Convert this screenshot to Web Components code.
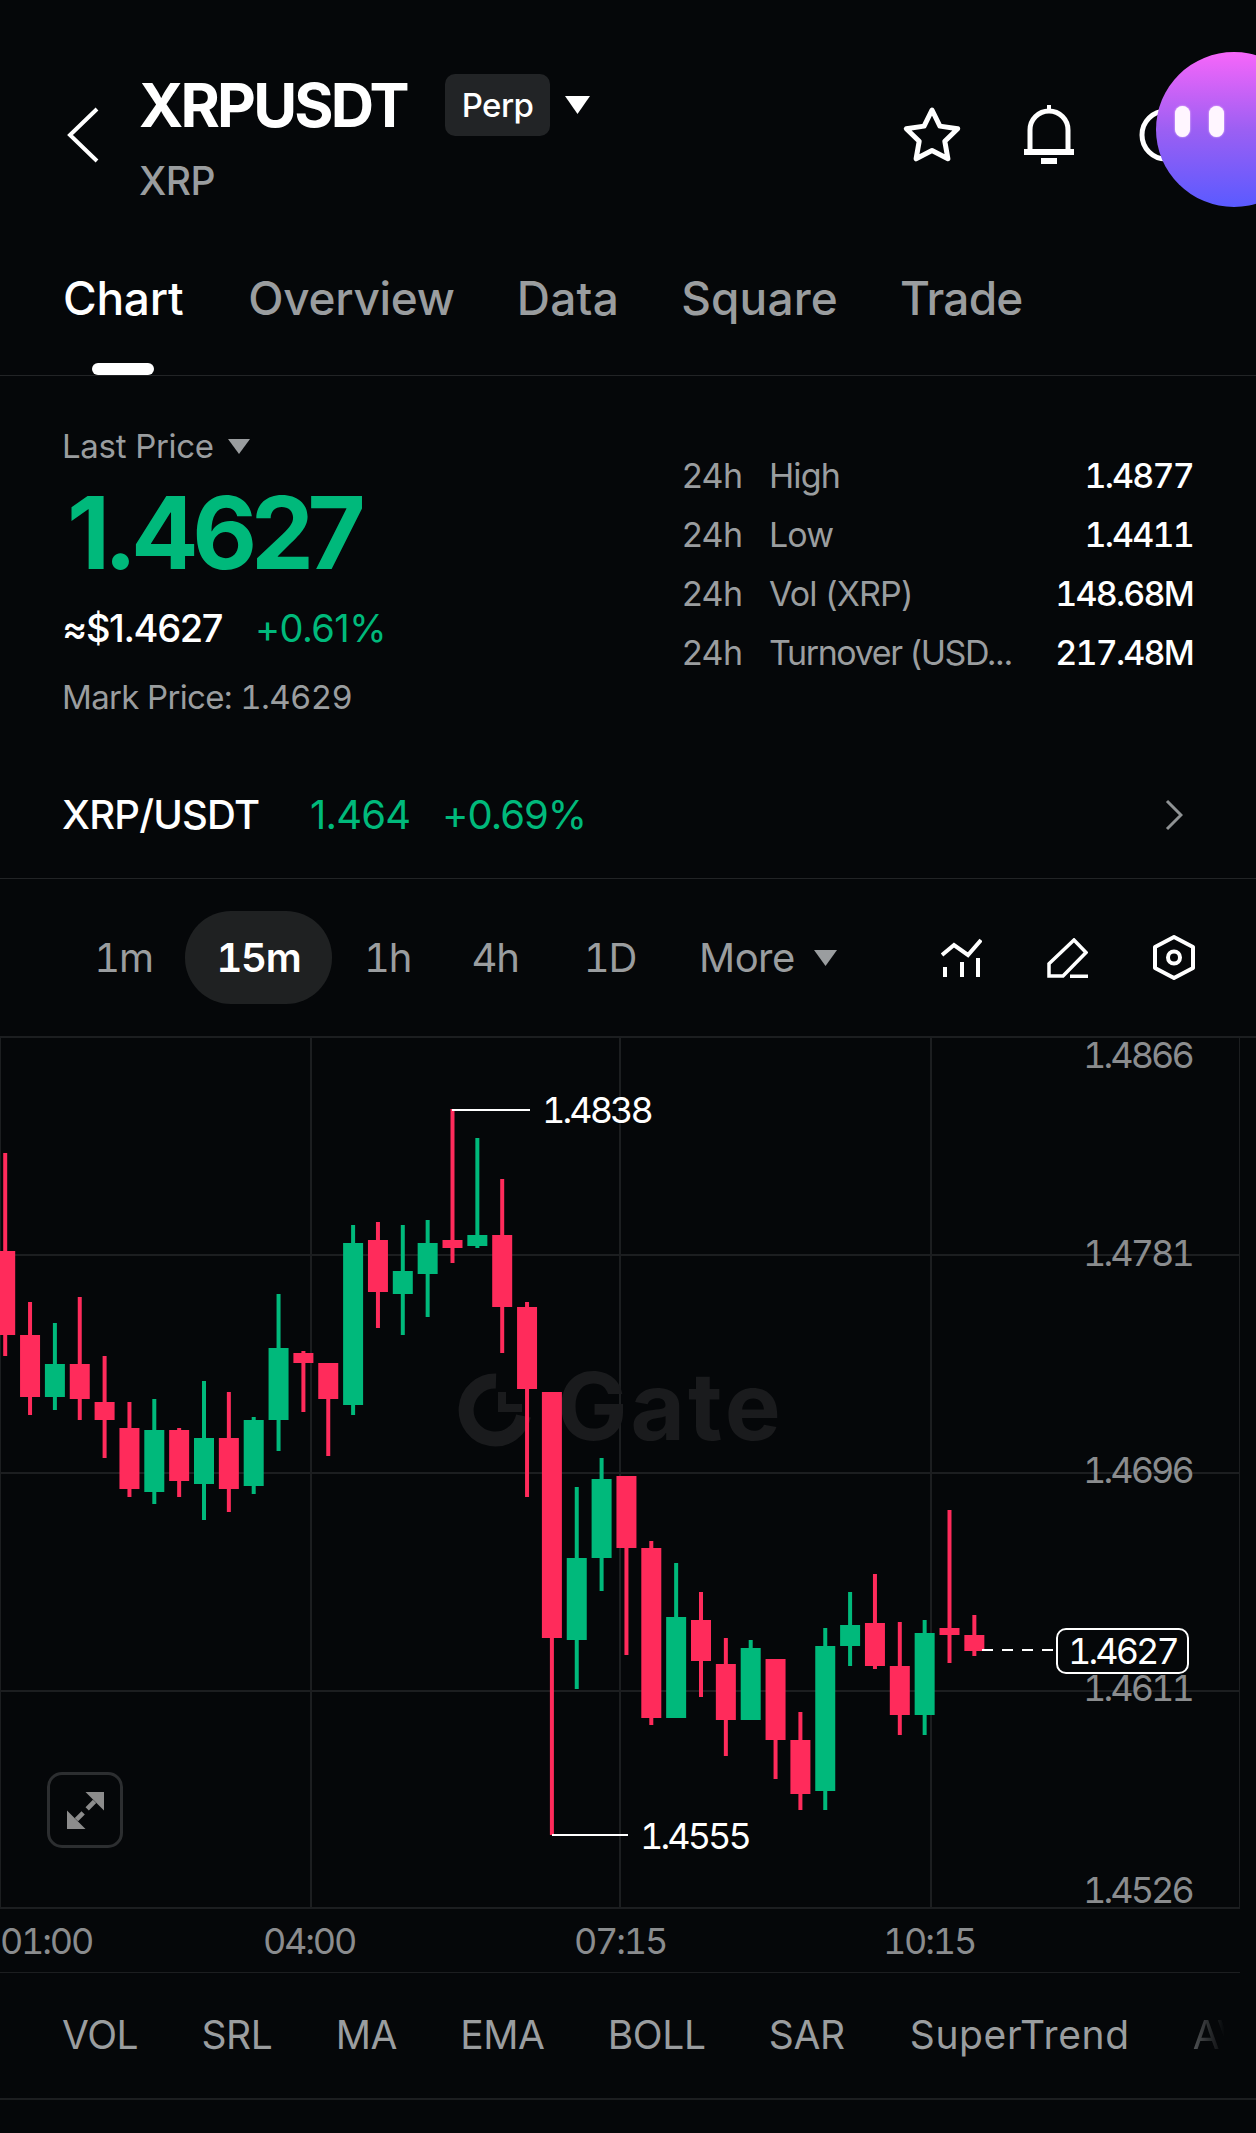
<!DOCTYPE html>
<html lang="en"><head><meta charset="utf-8"><title>XRPUSDT</title>
<style>
html,body{margin:0;padding:0;background:#050709}
body{width:1256px;height:2133px;overflow:hidden;font-family:Inter,"Liberation Sans",sans-serif;color:#fff}
app-page{display:block}
</style></head><body>
<app-page>
  <symbol-header></symbol-header>
  <tab-bar></tab-bar>
  <price-panel></price-panel>
  <time-bar></time-bar>
  <kline-chart></kline-chart>
  <indicator-bar></indicator-bar>
</app-page>
<script>
function def(name,html){customElements.define(name,class extends HTMLElement{constructor(){super();this.attachShadow({mode:'open'}).innerHTML=html}})}
def('app-page',`<style>:host{display:block;position:relative;width:1256px;height:2133px;overflow:hidden}</style><slot></slot>`);

def('symbol-header',`<style>
:host{display:flex;position:relative;height:240px;box-sizing:border-box;align-items:flex-start}
.back{margin:107px 40px 0 67px;flex:none}
.col{display:flex;flex-direction:column}
.title{display:flex;align-items:center;height:62px;margin-top:74px}
.sym{font-size:60px;line-height:62px;font-weight:700;letter-spacing:-2.800px;width:306px}
.badge{width:105px;height:62px;background:#222426;border-radius:10px;font-size:33px;font-weight:500;line-height:62px;text-align:center;letter-spacing:-.6px}
.tri{margin-left:15px;margin-top:-1px}
.sub{font-size:39px;line-height:40px;color:#9a9d9f;margin-top:25px;font-weight:500;letter-spacing:-.6px}
svg{display:block}
.acts{margin-left:auto;display:flex;align-items:center;margin-top:105px;width:354px;flex:none;height:60px}
.acts svg+svg{margin-left:62px}
.acts svg+svg+svg{margin-left:65px}
.bot{position:absolute;left:1156px;top:52px;width:100px;height:155px;overflow:hidden}
.bot i{position:absolute;left:0;top:0;width:156px;height:155px;border-radius:50%;background:linear-gradient(180deg,#f766fa 0%,#9c5ff3 50%,#5a5aff 100%)}
.bot b{position:absolute;top:54px;width:15px;height:31px;border-radius:8px;background:#fff6ff;box-shadow:0 0 2px #fbe4ff}
</style>
<svg class="back" width="32" height="56" viewBox="0 0 32 56"><path d="M30 2 3 28l27 26" fill="none" stroke="#fff" stroke-width="4"/></svg>
<div class="col">
  <div class="title"><span class="sym">XRPUSDT</span><span class="badge">Perp</span>
    <svg class="tri" width="25" height="18" viewBox="0 0 25 18"><path d="M0 0h25L12.500 18z" fill="#fff"/></svg></div>
  <div class="sub">XRP</div>
</div>
<div class="acts">
  <svg width="60" height="58" viewBox="0 0 60 58"><path d="M30 4 37.900 20.100 55.700 22.700 42.800 35.200 45.900 52.800 30 44.500 14.100 52.800 17.200 35.200 4.300 22.700 22.100 20.100Z" fill="none" stroke="#fff" stroke-width="5" stroke-linejoin="round"/></svg>
  <svg width="50" height="60" viewBox="0 0 50 60"><path d="M6 46V25a19 19 0 0 1 38 0v21" fill="none" stroke="#fff" stroke-width="5"/><rect x="0" y="44" width="50" height="6" fill="#fff"/><rect x="23" y="0" width="4" height="7" fill="#fff"/><rect x="17" y="53" width="16" height="6" fill="#fff"/></svg>
  <svg width="54" height="54" viewBox="0 0 54 54"><circle cx="27" cy="27" r="24" fill="none" stroke="#fff" stroke-width="5"/></svg>
</div>
<div class="bot"><i></i><b style="left:19px"></b><b style="left:53px"></b></div>`);

def('tab-bar',`<style>
:host{display:flex;gap:62px;height:136px;box-sizing:border-box;padding-left:63px;border-bottom:1px solid #222426;font-size:46px;font-weight:500;color:#9a9d9f;letter-spacing:-.3px}
span{position:relative;line-height:116px;height:116px}
.on{color:#fff;margin-right:3px}
.on::after{content:"";position:absolute;left:29px;top:123px;width:62px;height:12px;border-radius:6px;background:#fff}
</style><span class="on">Chart</span><span>Overview</span><span style="letter-spacing:.3px">Data</span><span style="letter-spacing:.15px">Square</span><span style="letter-spacing:-.8px">Trade</span>`);

def('stat-row',`<style>
:host{display:flex;height:59px;line-height:59px;font-size:34px;letter-spacing:-.6px}
.a{width:87px;color:#9a9d9f;flex:none}
.b{width:260px;color:#9a9d9f;flex:none;white-space:nowrap;letter-spacing:-.9px}
.c{flex:1;text-align:right;font-weight:500;color:#fff;font-feature-settings:"tnum";letter-spacing:-1.800px}
</style><span class="a">24h</span><span class="b"><slot name="k"></slot></span><span class="c"><slot name="v"></slot></span>`);

def('price-panel',`<style>
:host{display:block;height:503px;box-sizing:border-box;border-bottom:1px solid #222426;color:#9a9d9f}
.top{display:flex;height:375px;padding-left:62px;box-sizing:border-box}
.l{width:620px;flex:none}
.last{margin-top:53px;font-size:33px;line-height:34px;display:flex;align-items:center;letter-spacing:-.3px}
.last svg{margin-left:14px}
.big{font-size:100px;line-height:100px;margin-top:20px;margin-left:5px;font-weight:700;color:#00b97b;letter-spacing:-6.300px}
.sub{display:flex;margin-top:25px;line-height:40px;font-size:38px;color:#fff;font-weight:500;letter-spacing:-1.400px}
.sub em{font-style:normal;color:#00b97b;margin-left:33px;font-weight:400;letter-spacing:-.6px}
.mark{margin-top:32px;font-size:33px;line-height:34px;letter-spacing:-.65px;font-feature-settings:"tnum"}
.r{width:511px;flex:none;padding-top:70px;box-sizing:border-box}
.spot{display:flex;align-items:center;height:127px;padding:0 73px 0 62px;font-size:40px;font-weight:500;color:#00b97b;letter-spacing:-.8px}
.spot b{font-weight:500;color:#fff;width:248px}
.spot i{font-style:normal;font-weight:400;width:132px}
.spot u{text-decoration:none;font-weight:400;letter-spacing:-1px}
.spot svg{margin-left:auto}
</style>
<div class="top">
 <div class="l">
  <div class="last">Last Price<svg width="22" height="15" viewBox="0 0 22 15"><path d="M0 0h22L11 15z" fill="#9a9d9f"/></svg></div>
  <div class="big">1.4627</div>
  <div class="sub"><span>≈$1.4627</span><em>+0.61%</em></div>
  <div class="mark">Mark Price: 1.4629</div>
 </div>
 <div class="r">
  <stat-row><span slot="k">High</span><span slot="v">1.4877</span></stat-row>
  <stat-row><span slot="k">Low</span><span slot="v">1.4411</span></stat-row>
  <stat-row><span slot="k">Vol (XRP)</span><span slot="v">148.68M</span></stat-row>
  <stat-row><span slot="k" style="letter-spacing:-1.400px">Turnover (USD...</span><span slot="v">217.48M</span></stat-row>
 </div>
</div>
<div class="spot"><b>XRP/USDT</b><i>1.464</i><u>+0.69%</u>
<svg width="18" height="32" viewBox="0 0 18 32"><path d="M2 2l14 14L2 30" fill="none" stroke="#8f9294" stroke-width="3"/></svg></div>`);

def('time-bar',`<style>
:host{display:flex;align-items:center;height:157px;box-sizing:border-box;padding:0 61px 0 62px;font-size:40px;color:#9a9d9f;letter-spacing:-1.200px;font-feature-settings:"tnum"}
span{line-height:93px;height:93px;display:block;white-space:nowrap;text-align:center}
.on{background:#1f2122;border-radius:46px;color:#fff;font-weight:600}
.more{display:flex;align-items:center;margin-left:26px;letter-spacing:-.5px}
.more svg{margin-left:19px}
.acts{margin-left:auto;display:flex;gap:65px;align-items:center}
svg{display:block}
</style>
<span style="width:123px">1m</span><span class="on" style="width:147px">15m</span><span style="width:111px">1h</span><span style="width:104px">4h</span><span style="width:126px">1D</span>
<span class="more">More<svg width="23" height="16" viewBox="0 0 23 16"><path d="M0 0h23L11.500 16z" fill="#9a9d9f"/></svg></span>
<div class="acts">
<svg width="41" height="39" viewBox="0 0 41 39"><path d="M1 17 13 7l14 10L40 2" fill="none" stroke="#fff" stroke-width="4"/><path d="M2 29h4v10H2zM19 24h4v15h-4zM35 20h4v19h-4z" fill="#fff"/></svg>
<svg width="41" height="40" viewBox="0 0 41 40"><path d="M2 38V25.700L27 2 39 14.500 16 38Z" fill="none" stroke="#fff" stroke-width="3.500"/><path d="M23 36.500h18v3.500H23z" fill="#fff"/></svg>
<svg width="42" height="45" viewBox="0 0 42 45"><path d="M21 2 40 12V33L21 43 2 33V12Z" fill="none" stroke="#fff" stroke-width="4" stroke-linejoin="round"/><circle cx="21" cy="22.500" r="6" fill="none" stroke="#fff" stroke-width="4"/></svg>
</div>`);

const D=[[0,'r',1153,1251,1335,1356],[1,'r',1302,1335,1397,1415],[2,'g',1323,1364,1397,1410],[3,'r',1297,1364,1399,1420],[4,'r',1356,1402,1420,1458],[5,'r',1402,1428,1489,1497],[6,'g',1399,1430,1492,1504],[7,'r',1428,1430,1481,1497],[8,'g',1381,1438,1484,1520],[9,'r',1392,1438,1489,1512],[10,'g',1417,1420,1486,1494],[11,'g',1294,1348,1420,1451],[12,'r',1351,1353,1363,1412],[13,'r',1363,1363,1399,1456],[14,'g',1225,1243,1405,1415],[15,'r',1222,1240,1292,1328],[16,'g',1225,1271,1294,1335],[17,'g',1220,1243,1274,1317],[18,'r',1109,1240,1248,1263],[19,'g',1138,1235,1246,1248],[20,'r',1179,1235,1307,1353],[21,'r',1302,1307,1389,1497],[22,'r',1392,1392,1638,1835],[23,'g',1487,1558,1640,1689],[24,'g',1458,1479,1558,1591],[25,'r',1476,1476,1548,1655],[26,'r',1541,1548,1718,1725],[27,'g',1563,1617,1718,1718],[28,'r',1592,1620,1661,1697],[29,'r',1638,1664,1720,1756],[30,'g',1640,1648,1720,1720],[31,'r',1659,1659,1740,1779],[32,'r',1712,1740,1794,1810],[33,'g',1628,1646,1791,1810],[34,'g',1592,1625,1646,1666],[35,'r',1574,1623,1666,1669],[36,'r',1622,1666,1715,1735],[37,'g',1620,1633,1715,1735],[38,'r',1510,1628,1635,1663],[39,'r',1615,1635,1651,1656]];
const T=1036;
let candles='';
for(const [i,c,a,b,e,f] of D){const x=5.2+i*24.85,col=c=='g'?'#00b97b':'#ff2b5b';
candles+=`<rect x="${(x-2).toFixed(2)}" y="${a-T}" width="4" height="${f-a}" fill="${col}"/><rect x="${(x-10).toFixed(2)}" y="${b-T}" width="20" height="${e-b}" fill="${col}"/>`}

def('kline-chart',`<style>
:host{display:block;position:relative;height:937px;font-size:36px;letter-spacing:-2.900px;color:#8a8c8e;font-feature-settings:"tnum"}
svg.c{position:absolute;left:0;top:0}
svg.b{position:absolute;left:0;top:0}
span{position:absolute;line-height:40px;white-space:nowrap}
.w{color:#fff}
.y{left:1083px}
.t{transform:translateX(-50%);top:885px;letter-spacing:-2.200px}
.wm{left:557px;top:320px;font-size:94px;line-height:100px;font-weight:700;color:#1a1b1d;letter-spacing:3px;font-feature-settings:normal}
.now{left:1056px;top:592px;width:133px;height:46px;box-sizing:border-box;border:2px solid #fff;border-radius:10px;background:#050709;color:#fff;line-height:43px;text-align:center}
.exp{position:absolute;left:47px;top:736px;width:76px;height:76px;box-sizing:border-box;border:3px solid #2c2e30;border-radius:15px;display:flex;align-items:center;justify-content:center}
</style>
<svg class="b" width="1256" height="937" viewBox="0 0 1256 937">
 <g fill="#1c1e20">
  <rect x="0" y="0" width="1256" height="2"/><rect x="0" y="218" width="1240" height="2"/><rect x="0" y="436" width="1240" height="2"/><rect x="0" y="654" width="1240" height="2"/><rect x="0" y="871" width="1240" height="2"/>
  <rect x="0" y="0" width="1" height="872"/><rect x="310" y="0" width="2" height="872"/><rect x="619" y="0" width="2" height="872"/><rect x="930" y="0" width="2" height="872"/><rect x="1239" y="0" width="1" height="872"/>
  <rect x="0" y="936" width="1240" height="2"/>
 </g>
 <path d="M496 345A29 29 0 1 0 523.500 380" fill="none" stroke="#1a1b1d" stroke-width="15"/>
 <path d="M502 356V372H522" fill="none" stroke="#1a1b1d" stroke-width="8"/>
</svg>
<span class="wm">Gate</span>
<svg class="c" width="1256" height="937" viewBox="0 0 1256 937">
 ${candles}
 <path d="M452 74h78M552 799h76" stroke="#fff" stroke-width="2" fill="none"/>
 <path d="M982 614h76" stroke="#fff" stroke-width="2" stroke-dasharray="11 9" fill="none"/>
</svg>
<span class="y" style="top:-1px">1.4866</span><span class="y" style="top:197px">1.4781</span><span class="y" style="top:414px">1.4696</span><span class="y" style="top:632px">1.4611</span><span class="y" style="top:834px">1.4526</span>
<span class="t" style="left:46px">01:00</span><span class="t" style="left:309px">04:00</span><span class="t" style="left:620px">07:15</span><span class="t" style="left:929px">10:15</span>
<span class="w" style="left:542px;top:54px">1.4838</span>
<span class="w" style="left:640px;top:780px">1.4555</span>
<span class="now">1.4627</span>
<div class="exp"><svg width="37" height="37" viewBox="0 0 110 110"><path d="M55 0h55v55zM0 55v55h55z" fill="#8c8c8c"/><path d="M82 28 60 50M28 82 48 62" stroke="#8c8c8c" stroke-width="14" fill="none"/></svg></div>`);

def('indicator-bar',`<style>
:host{display:flex;gap:63.200px;height:127px;box-sizing:border-box;padding-left:62px;border-bottom:2px solid #1c1e20;font-size:39px;line-height:124px;color:#9a9d9f;letter-spacing:-.4px;width:1256px;overflow:hidden;white-space:nowrap}
.s{letter-spacing:.6px;margin-left:2px}
.f{width:32px;overflow:hidden;-webkit-mask-image:linear-gradient(90deg,rgba(0,0,0,.5),transparent)}
</style><span>VOL</span><span>SRL</span><span>MA</span><span>EMA</span><span>BOLL</span><span>SAR</span><span class="s">SuperTrend</span><span class="f">AVL</span>`);
</script>
</body></html>
